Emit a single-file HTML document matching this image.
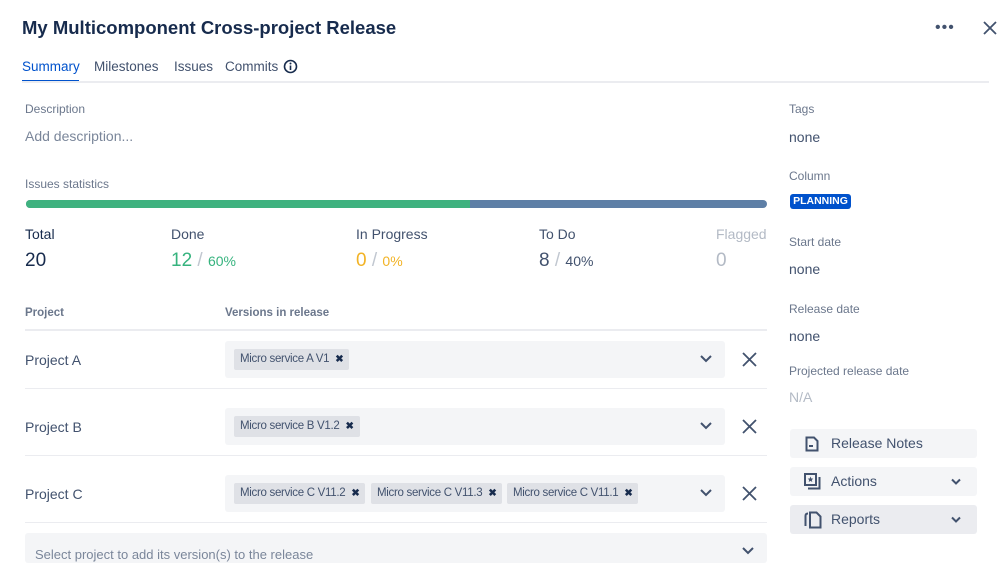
<!DOCTYPE html>
<html><head><meta charset="utf-8"><style>
*{margin:0;padding:0;box-sizing:border-box}
body{width:999px;height:551px;overflow:hidden;background:#fff;font-family:"Liberation Sans",sans-serif;color:#172b4d;position:relative}
.a{position:absolute;white-space:nowrap}
.lbl{font-size:12px;color:#6b778c}
.rl{font-size:12px;color:#6b778c}
.val{font-size:14px;color:#42526e}
.line{position:absolute;height:1px;background:#ebecf0}
.box{position:absolute;left:225px;width:500px;height:37px;background:#f4f5f7;border-radius:3px}
.tag{position:absolute;top:8px;height:21px;background:#dfe1e6;border-radius:2px;font-size:11.5px;color:#42526e;line-height:21px;padding:0 6px;letter-spacing:-0.3px}
.tag b{font-size:10px;margin-left:6px;color:#172b4d}
.btn{position:absolute;left:790px;width:187px;height:29px;background:#f4f5f7;border-radius:3px;font-size:14px;color:#42526e;line-height:29px}
.btn span{position:absolute;left:41px}
.chev{position:absolute;right:16px;top:11px}
.tab{position:absolute;top:59px;font-size:13.5px;color:#42526e;white-space:nowrap}
</style></head><body>
<div class="a" style="left:22px;top:17px;font-size:18.5px;font-weight:bold;color:#172b4d">My Multicomponent Cross-project Release</div>
<div class="a" style="left:935px;top:19px;font-size:16px;color:#42526e;letter-spacing:1px">•••</div>
<svg class="a" style="left:982px;top:20px" width="16" height="16"><path d="M2 2L14 14M14 2L2 14" stroke="#42526e" stroke-width="1.8"/></svg>
<div class="tab" style="left:22px;color:#0052cc">Summary</div>
<div class="a" style="left:22px;top:80px;width:57px;height:2px;background:#0052cc"></div>
<div class="tab" style="left:94px">Milestones</div>
<div class="tab" style="left:174px">Issues</div>
<div class="tab" style="left:225px">Commits</div>
<svg class="a" style="left:283px;top:59px" width="15" height="15"><circle cx="7.5" cy="7.5" r="6" fill="none" stroke="#172b4d" stroke-width="1.6"/><path d="M7.5 6.5V11" stroke="#172b4d" stroke-width="1.6"/><circle cx="7.5" cy="4.5" r="1" fill="#172b4d"/></svg>
<div class="line" style="left:22px;top:81px;width:967px;height:2px"></div>

<div class="a lbl" style="left:25px;top:102px">Description</div>
<div class="a" style="left:25px;top:128px;font-size:14px;color:#7a869a">Add description...</div>
<div class="a lbl" style="left:25px;top:177px">Issues statistics</div>
<div class="a" style="left:26px;top:200px;width:741px;height:8px;border-radius:4px;background:#5e7fa6;overflow:hidden"><div style="width:444px;height:8px;background:#3fb27f"></div></div>

<div class="a" style="left:25px;top:226px;font-size:14px;color:#172b4d">Total</div>
<div class="a" style="left:25px;top:250px;font-size:19px;color:#172b4d">20</div>
<div class="a" style="left:171px;top:226px;font-size:14px;color:#42526e">Done</div>
<div class="a" style="left:171px;top:250px;font-size:19px;color:#36b37e">12 <span style="color:#c1c7d0">/</span> <span style="font-size:14px">60%</span></div>
<div class="a" style="left:356px;top:226px;font-size:14px;color:#42526e">In Progress</div>
<div class="a" style="left:356px;top:250px;font-size:19px;color:#f2b325">0 <span style="color:#c1c7d0">/</span> <span style="font-size:14px">0%</span></div>
<div class="a" style="left:539px;top:226px;font-size:14px;color:#42526e">To Do</div>
<div class="a" style="left:539px;top:250px;font-size:19px;color:#42526e">8 <span style="color:#c1c7d0">/</span> <span style="font-size:14px">40%</span></div>
<div class="a" style="left:716px;top:226px;font-size:14px;color:#b3bac5">Flagged</div>
<div class="a" style="left:716px;top:250px;font-size:19px;color:#b3bac5">0</div>

<div class="a" style="left:25px;top:307px;font-size:11.5px;font-weight:bold;color:#6b778c">Project</div>
<div class="a" style="left:225px;top:307px;font-size:11.5px;font-weight:bold;color:#6b778c">Versions in release</div>
<div class="line" style="left:25px;top:329px;width:742px;height:2px"></div>

<div class="a" style="left:25px;top:352px;font-size:14px;color:#42526e">Project A</div>
<div class="box" style="top:341px"><div class="tag" style="left:9px">Micro service A V1<b>✖</b></div></div>
<div class="line" style="left:25px;top:388px;width:742px"></div>
<div class="a" style="left:25px;top:419px;font-size:14px;color:#42526e">Project B</div>
<div class="box" style="top:408px"><div class="tag" style="left:9px">Micro service B V1.2<b>✖</b></div></div>
<div class="line" style="left:25px;top:455px;width:742px"></div>
<div class="a" style="left:25px;top:486px;font-size:14px;color:#42526e">Project C</div>
<div class="box" style="top:475px"><div class="tag" style="left:9px">Micro service C V11.2<b>✖</b></div><div class="tag" style="left:146px">Micro service C V11.3<b>✖</b></div><div class="tag" style="left:282px">Micro service C V11.1<b>✖</b></div></div>
<div class="line" style="left:25px;top:522px;width:742px"></div>
<div class="a" style="left:25px;top:533px;width:742px;height:30px;background:#f4f5f7;border-radius:3px"><div style="position:absolute;left:10px;top:14px;font-size:13px;color:#7a869a">Select project to add its version(s) to the release</div></div>

<svg class="a" style="left:700px;top:354px" width="12" height="10"><path d="M1 2L6 7L11 2" fill="none" stroke="#42526e" stroke-width="2"/></svg>
<svg class="a" style="left:700px;top:421px" width="12" height="10"><path d="M1 2L6 7L11 2" fill="none" stroke="#42526e" stroke-width="2"/></svg>
<svg class="a" style="left:700px;top:488px" width="12" height="10"><path d="M1 2L6 7L11 2" fill="none" stroke="#42526e" stroke-width="2"/></svg>
<svg class="a" style="left:742px;top:352px" width="15" height="15"><path d="M1 1L14 14M14 1L1 14" stroke="#42526e" stroke-width="1.8"/></svg>
<svg class="a" style="left:742px;top:419px" width="15" height="15"><path d="M1 1L14 14M14 1L1 14" stroke="#42526e" stroke-width="1.8"/></svg>
<svg class="a" style="left:742px;top:486px" width="15" height="15"><path d="M1 1L14 14M14 1L1 14" stroke="#42526e" stroke-width="1.8"/></svg>
<svg class="a" style="left:742px;top:546px" width="12" height="10"><path d="M1 2L6 7L11 2" fill="none" stroke="#42526e" stroke-width="2"/></svg>

<div class="a rl" style="left:789px;top:102px">Tags</div>
<div class="a val" style="left:789px;top:129px">none</div>
<div class="a rl" style="left:789px;top:169px">Column</div>
<div class="a" style="left:790px;top:194px;width:61px;height:15px;background:#0052cc;border-radius:3px;color:#fff;font-size:10.5px;font-weight:bold;line-height:15px;text-align:center">PLANNING</div>
<div class="a rl" style="left:789px;top:235px">Start date</div>
<div class="a val" style="left:789px;top:261px">none</div>
<div class="a rl" style="left:789px;top:302px">Release date</div>
<div class="a val" style="left:789px;top:328px">none</div>
<div class="a rl" style="left:789px;top:364px">Projected release date</div>
<div class="a" style="left:789px;top:389px;font-size:14px;color:#b3bac5">N/A</div>

<div class="btn" style="top:429px"><svg style="position:absolute;left:15px;top:7px" width="14" height="16"><path d="M1.5 1.5H9L12.5 5V14.5H1.5Z" fill="none" stroke="#42526e" stroke-width="2"/><path d="M4 10H8" stroke="#42526e" stroke-width="2"/></svg><span>Release Notes</span></div>
<div class="btn" style="top:467px"><svg style="position:absolute;left:14px;top:6px" width="17" height="17"><rect x="1" y="1" width="11" height="11" fill="none" stroke="#42526e" stroke-width="2"/><path d="M4 15.5H15.5V4" fill="none" stroke="#42526e" stroke-width="2"/><path d="M6.5 3.5L7.3 5.5L9.3 5.6L7.8 7L8.3 9L6.5 7.9L4.7 9L5.2 7L3.7 5.6L5.7 5.5Z" fill="#42526e"/></svg><span>Actions</span><svg class="chev" width="10" height="8"><path d="M1 1.5L5 5.5L9 1.5" fill="none" stroke="#42526e" stroke-width="2"/></svg></div>
<div class="btn" style="top:505px;background:#ebecf0"><svg style="position:absolute;left:14px;top:6px" width="18" height="18"><path d="M4 2.5C2.5 2.5 1.5 3 1.5 5V15" fill="none" stroke="#42526e" stroke-width="2"/><path d="M6 1.5H12.5L16.5 5.5V16.5H6Z" fill="none" stroke="#42526e" stroke-width="2"/></svg><span>Reports</span><svg class="chev" width="10" height="8"><path d="M1 1.5L5 5.5L9 1.5" fill="none" stroke="#42526e" stroke-width="2"/></svg></div>
</body></html>
